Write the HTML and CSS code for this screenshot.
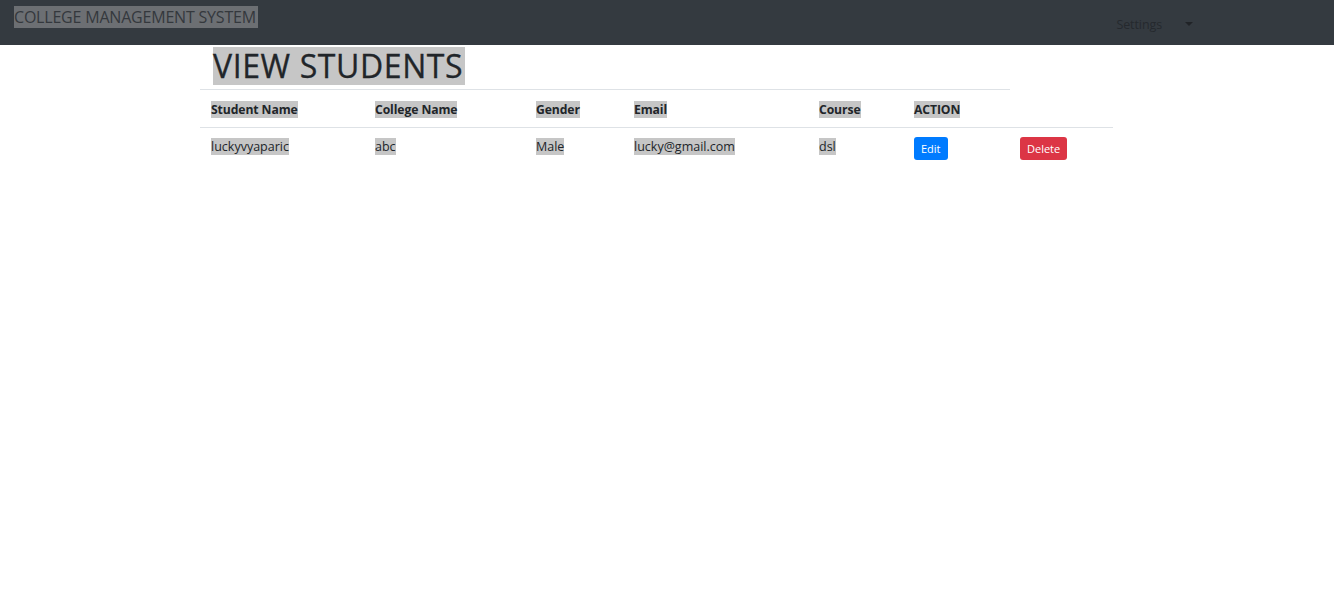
FILE: index.html
```html
<!DOCTYPE html>
<html>
<head>
<meta charset="utf-8">
<link rel="stylesheet" href="styles.css">
</head>
<body>
<nav class="navbar">
  <span class="brand"><span class="sel-dark">COLLEGE MANAGEMENT SYSTEM</span></span>
  <div class="settings">
    <span class="settings-label">Settings</span>
    <span class="caret"></span>
  </div>
</nav>
<main class="content">
  <h1 class="title"><span class="sel title-sel">VIEW STUDENTS </span></h1>
  <hr class="rule">
  <table class="students">
    <thead>
      <tr>
        <th class="c-name"><span class="sel">Student Name</span></th>
        <th class="c-college"><span class="sel">College Name</span></th>
        <th class="c-gender"><span class="sel">Gender</span></th>
        <th class="c-email"><span class="sel">Email</span></th>
        <th class="c-course"><span class="sel">Course</span></th>
        <th class="c-action"><span class="sel">ACTION</span></th>
        <th class="c-del"></th>
      </tr>
    </thead>
    <tbody>
      <tr>
        <td><span class="sel">luckyvyaparic</span></td>
        <td><span class="sel">abc</span></td>
        <td><span class="sel">Male</span></td>
        <td><span class="sel">lucky@gmail.com</span></td>
        <td><span class="sel">dsl</span></td>
        <td><a class="btn btn-edit">Edit</a></td>
        <td><a class="btn btn-delete">Delete</a></td>
      </tr>
    </tbody>
  </table>
</main>
</body>
</html>
```
FILE: styles.css
```css
* { box-sizing: border-box; }
html, body { margin: 0; padding: 0; background: #fff; }
body {
  font-family: "Open Sans", "Noto Sans", "Liberation Sans", sans-serif;
  color: #212529;
}
.navbar {
  height: 45px;
  background: #343a40;
  display: flex;
  align-items: flex-start;
  padding-left: 14px;
}
.brand {
  margin-top: 6px;
  font-size: 16px;
  line-height: 22px;
  color: #34383d;
  letter-spacing: -0.2px;
}
.sel-dark { background: #6c6f73; display: inline-block; padding-right: 2px; height: 22px; }
.settings {
  margin-left: auto;
  margin-right: 141px;
  margin-top: 16px;
  display: flex;
  align-items: center;
  font-size: 12.5px;
  color: #25292e;
}
.settings-label { letter-spacing: -0.1px; }
.caret {
  margin-left: 23px;
  width: 0; height: 0;
  border-left: 4px solid transparent;
  border-right: 4px solid transparent;
  border-top: 4px solid #202327;
  margin-top: -1px;
}
.content { margin-left: 200px; }
.title {
  margin: 2px 0 0 13px;
  font-size: 32px;
  font-weight: 400;
  line-height: 38px;
  height: 40px;
  color: #212529;
  -webkit-text-stroke: 0.3px #212529;
}
.title-sel {
  display: inline-block;
  line-height: 38px;
  height: 38px;
  letter-spacing: 0.6px;
  padding-right: 2px;
}
.sel { background: #c6c6c6; }
.rule {
  width: 810px;
  margin: 2px 0 0 0;
  border: 0;
  border-top: 1px solid #dee2e6;
}
.students {
  border-collapse: collapse;
  width: 913px;
  table-layout: fixed;
  font-size: 12.5px;
}
.students th, .students td {
  text-align: left;
  padding: 0 0 0 11px;
  vertical-align: middle;
}
.students th {
  height: 37px;
  font-weight: 700;
  font-size: 12.2px;
  color: #212529;
  border-bottom: 1px solid #dee2e6;
  padding-top: 2px;
  letter-spacing: -0.1px;
}
.students td { height: 38px; color: #212529; padding-top: 0; }
.c-name { width: 164px; }
.c-college { width: 161px; }
.c-gender { width: 98px; }
.c-email { width: 185px; }
.c-course { width: 95px; }
.c-action { width: 106px; }
.c-del { width: 104px; }
.btn {
  display: inline-block;
  font-size: 11px;
  line-height: 23px;
  padding: 0 7px;
  border-radius: 3px;
  color: #fff;
  margin-top: 4px;
}
.btn-edit { background: #007bff; }
.btn-delete { background: #dc3545; }
```
